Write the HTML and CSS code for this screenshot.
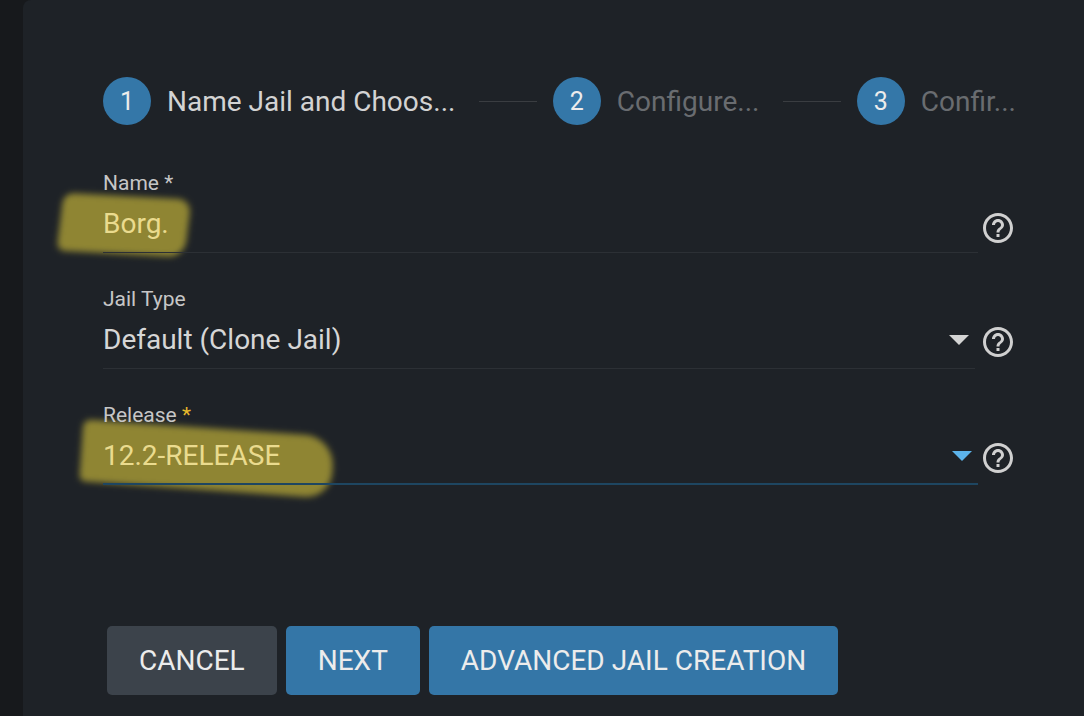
FILE: index.html
```html
<!DOCTYPE html>
<html lang="en">
<head>
    <meta charset="UTF-8">
    <meta name="viewport" content="width=device-width, initial-scale=1.0">
    <title>Add Jail</title>
    <link rel="stylesheet" href="styles.css">
</head>
<body>
    <div class="side"></div>
    <div class="card">
        <div class="mark mark-name"></div>
        <div class="mark mark-release"></div>

        <div class="stepper">
            <div class="step active">
                <span class="step-num">1</span>
                <span class="step-label">Name Jail and Choos...</span>
            </div>
            <div class="step-line"></div>
            <div class="step">
                <span class="step-num">2</span>
                <span class="step-label">Configure...</span>
            </div>
            <div class="step-line"></div>
            <div class="step">
                <span class="step-num">3</span>
                <span class="step-label">Confir...</span>
            </div>
        </div>

        <form class="jail-form">
            <div class="field">
                <div class="field-body">
                    <label class="field-label">Name *</label>
                    <div class="field-input">
                        <span class="value marked">Borg.</span>
                    </div>
                </div>
                <svg class="help help-low" viewBox="0 0 24 24"><path d="M11 18h2v-2h-2v2zm1-16C6.48 2 2 6.48 2 12s4.48 10 10 10 10-4.48 10-10S17.52 2 12 2zm0 18c-4.41 0-8-3.59-8-8s3.59-8 8-8 8 3.59 8 8-3.59 8-8 8zm0-14c-2.21 0-4 1.79-4 4h2c0-1.1.9-2 2-2s2 .9 2 2c0 2-3 1.75-3 5h2c0-2.25 3-2.5 3-5 0-2.21-1.79-4-4-4z"/></svg>
            </div>

            <div class="field">
                <div class="field-body short">
                    <label class="field-label">Jail Type</label>
                    <div class="field-input">
                        <span class="value">Default (Clone Jail)</span>
                        <span class="arrow"></span>
                    </div>
                </div>
                <svg class="help" viewBox="0 0 24 24"><path d="M11 18h2v-2h-2v2zm1-16C6.48 2 2 6.48 2 12s4.48 10 10 10 10-4.48 10-10S17.52 2 12 2zm0 18c-4.41 0-8-3.59-8-8s3.59-8 8-8 8 3.59 8 8-3.59 8-8 8zm0-14c-2.21 0-4 1.79-4 4h2c0-1.1.9-2 2-2s2 .9 2 2c0 2-3 1.75-3 5h2c0-2.25 3-2.5 3-5 0-2.21-1.79-4-4-4z"/></svg>
            </div>

            <div class="field focused">
                <div class="field-body">
                    <label class="field-label">Release <span class="req">*</span></label>
                    <div class="field-input">
                        <span class="value marked">12.2-RELEASE</span>
                        <span class="arrow"></span>
                    </div>
                </div>
                <svg class="help" viewBox="0 0 24 24"><path d="M11 18h2v-2h-2v2zm1-16C6.48 2 2 6.48 2 12s4.48 10 10 10 10-4.48 10-10S17.52 2 12 2zm0 18c-4.41 0-8-3.59-8-8s3.59-8 8-8 8 3.59 8 8-3.59 8-8 8zm0-14c-2.21 0-4 1.79-4 4h2c0-1.1.9-2 2-2s2 .9 2 2c0 2-3 1.75-3 5h2c0-2.25 3-2.5 3-5 0-2.21-1.79-4-4-4z"/></svg>
            </div>

            <div class="actions">
                <button type="button" class="btn btn-cancel">Cancel</button>
                <button type="button" class="btn btn-primary">Next</button>
                <button type="button" class="btn btn-primary">Advanced Jail Creation</button>
            </div>
        </form>
    </div>
</body>
</html>
```

FILE: styles.css
```css
body {
    margin: 0;
    height: 716px;
    overflow: hidden;
    display: flex;
    background-color: #17191c;
    font-family: Roboto, "Liberation Sans", sans-serif;
}
.side {
    width: 23px;
    flex-shrink: 0;
}
.card {
    position: relative;
    flex: 1;
    background-color: #1e2227;
    border-top-left-radius: 8px;
    padding: 77px 68px 0 80px;
}

/* stepper */
.stepper {
    display: flex;
    align-items: center;
    height: 48px;
}
.step {
    display: flex;
    align-items: center;
    gap: 16px;
}
.step-num {
    width: 48px;
    height: 48px;
    border-radius: 50%;
    background-color: #3477a8;
    color: #ececec;
    font-size: 25px;
    display: flex;
    align-items: center;
    justify-content: center;
}
.step-label {
    font-size: 28px;
    color: #696c70;
    white-space: nowrap;
}
.step.active .step-label {
    color: #d3d3d3;
}
.step-line {
    flex: 1;
    height: 1px;
    background-color: #3a3d41;
    margin: 0 16px 0 24px;
}

/* form */
.jail-form {
    display: flex;
    flex-direction: column;
    gap: 34px;
    margin-top: 46px;
}
.field {
    position: relative;
    z-index: 1;
    display: flex;
    align-items: flex-start;
    gap: 2px;
}
.field-body {
    flex: 1;
}
.field-body.short {
    margin-right: 3px;
}
.field-label {
    display: block;
    font-size: 21px;
    line-height: 24px;
    color: #c6c6c6;
}
.req {
    color: #e6b92c;
}
.field-input {
    display: flex;
    align-items: center;
    margin-top: 13px;
    padding-bottom: 12px;
    border-bottom: 1px solid #2c3035;
}
.focused .field-input {
    border-bottom: 2px solid #1e4661;
    padding-bottom: 11px;
}
.value {
    flex: 1;
    font-size: 28px;
    line-height: 32px;
    color: #d6d6d6;
}
.value.marked {
    color: #eadb8e;
}
.arrow {
    width: 0;
    height: 0;
    margin-right: 6px;
    border-left: 10px solid transparent;
    border-right: 10px solid transparent;
    border-top: 10px solid #d4d4d4;
}
.focused .arrow {
    border-top-color: #5cb3ea;
}
.help {
    width: 36px;
    height: 36px;
    margin-top: 37px;
    fill: #d0d0d0;
}
.help-low {
    margin-top: 39px;
}

/* highlighter marks */
.mark {
    position: absolute;
    z-index: 0;
    background-color: #8f8533;
    filter: blur(3px);
    border-radius: 10px 14px 16px 8px;
}
.mark-name {
    left: 37px;
    top: 196px;
    width: 128px;
    height: 58px;
    transform: rotate(3deg) skewX(-4deg);
}
.mark-release {
    left: 58px;
    top: 428px;
    width: 252px;
    height: 62px;
    transform: rotate(4deg);
    border-radius: 8px 30px 26px 6px;
}

/* buttons */
.actions {
    display: flex;
    gap: 9px;
    margin-top: 107px;
    margin-left: 4px;
}
.btn {
    height: 69px;
    padding: 0 32px;
    border: none;
    border-radius: 5px;
    font-family: Roboto, "Liberation Sans", sans-serif;
    font-size: 28px;
    text-transform: uppercase;
    color: #ececec;
    cursor: pointer;
}
.btn-cancel {
    background-color: #3c434b;
}
.btn-primary {
    background-color: #3476a7;
}
```
